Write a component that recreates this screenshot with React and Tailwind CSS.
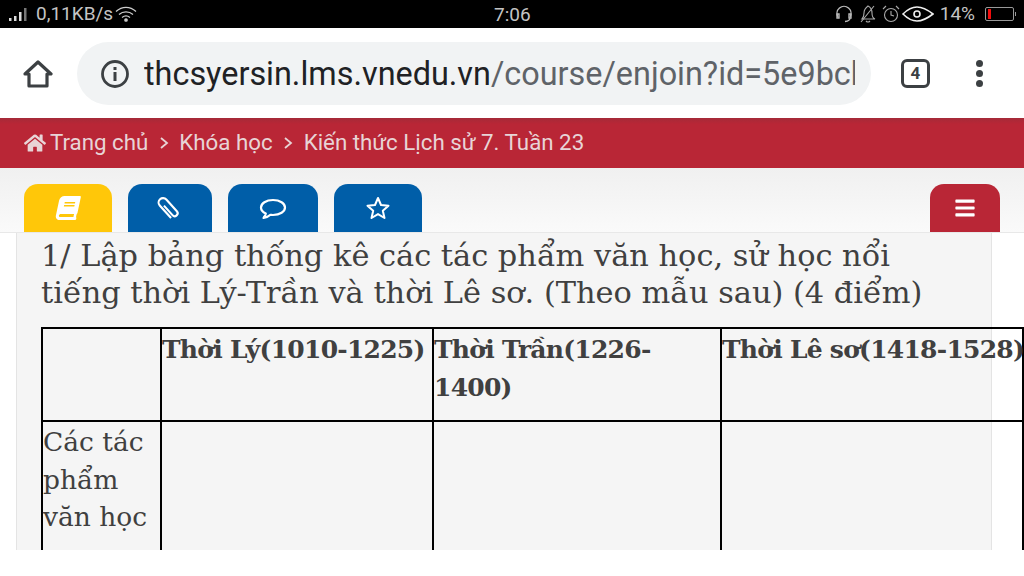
import React from "react";
import { FaHome, FaBook, FaBars } from "react-icons/fa";

function Status() {
  return (
    <div className="h-[28px] bg-black text-[#c4c4c4] flex items-center justify-between relative text-[19px] font-['Roboto',sans-serif]">
      <div className="flex items-center pl-[9px]">
        <svg width="22" height="16" viewBox="0 0 22 16" className="mr-[5px]">
          <rect x="0" y="12" width="2.5" height="3" fill="#ddd" />
          <rect x="5" y="10" width="2.5" height="5" fill="#ddd" />
          <rect x="10" y="6" width="2.5" height="9" fill="#ddd" />
          <rect x="15" y="2" width="2.5" height="13" fill="#777" />
        </svg>
        <span>0,11KB/s</span>
        <svg width="24" height="18" viewBox="0 0 24 18" fill="none" stroke="#ccc" strokeWidth="1.3" className="ml-[1px]">
          <path d="M2 6.5C8 1 16 1 22 6.5" />
          <path d="M5 9.5C9 6 15 6 19 9.5" />
          <path d="M8 12.5C10.5 10.5 13.5 10.5 16 12.5" />
          <circle cx="12" cy="15" r="1.2" fill="#ccc" />
        </svg>
      </div>
      <span className="absolute left-[494px] top-[1px]">7:06</span>
      <div className="flex items-center pr-[10px]">
        <svg width="18" height="18" viewBox="0 0 18 18" fill="none" stroke="#bbb" strokeWidth="1.4" className="mr-[6px]">
          <path d="M3 12a7 7 0 1 1 12 0" />
          <path d="M2 9h2v4H2zM14 9h2v4h-2z" />
          <path d="M15 13q0 3-5 3.5" />
        </svg>
        <svg width="18" height="20" viewBox="0 0 18 20" fill="none" stroke="#aaa" strokeWidth="1.1" className="mr-[5px]">
          <path d="M3 15q2-2 2-6t4-7q4 2 4 7t3 6z" />
          <path d="M7 17q2 2 4 0M2 18L15 2" />
        </svg>
        <svg width="18" height="18" viewBox="0 0 18 18" fill="none" stroke="#aaa" strokeWidth="1.1" className="mr-[2px]">
          <circle cx="9" cy="10" r="6.5" />
          <path d="M9 6v4l3 1M1 4l3-3M17 4l-3-3" />
        </svg>
        <svg width="32" height="16" viewBox="0 0 32 16" fill="none" stroke="#eee" strokeWidth="1.6" className="mr-[6px]">
          <path d="M1 8Q8 1 15 1T31 8Q22 15 15 15T1 8z" />
          <circle cx="15" cy="8" r="3" />
        </svg>
        <span className="mr-[10px]">14%</span>
        <div className="w-[29px] h-[14px] border border-[#999] rounded-[2px] flex items-center p-[1px] relative">
          <div className="w-[3px] h-[10px] bg-[#f20d0d] ml-[1px]" />
          <div className="absolute -right-[3px] top-[4px] w-[1px] h-[4px] bg-[#999]" />
        </div>
      </div>
    </div>
  );
}

function Browser() {
  return (
    <div className="h-[90px] bg-white flex items-center font-['Roboto',sans-serif]">
      <svg width="30" height="30" viewBox="0 0 30 30" fill="none" stroke="#3c4043" strokeWidth="3.2" className="ml-[23px] mt-[1px]">
        <path d="M2 15L15 3l13 12h-4v12H6V15z" strokeLinejoin="round" />
      </svg>
      <div className="ml-[24px] w-[794px] h-[63px] rounded-[32px] bg-[#f1f3f4] flex items-center pl-[23px] mt-[1px]">
        <svg width="30" height="30" viewBox="0 0 30 30" fill="none" className="shrink-0">
          <circle cx="15" cy="15" r="12.5" stroke="#3c4043" strokeWidth="2.8" />
          <rect x="13.5" y="13" width="3" height="9" fill="#3c4043" />
          <rect x="13.5" y="8" width="3" height="3" fill="#3c4043" />
        </svg>
        <div className="ml-[14px] w-[711px] overflow-hidden whitespace-nowrap text-[32.4px] leading-[40px] text-[#5f6368]">
          <span className="text-[#202124]">thcsyersin.lms.vnedu.vn</span>/course/enjoin?id=5e9bcb
        </div>
      </div>
      <div className="ml-[30px] w-[29px] h-[29px] border-[3px] border-[#3c4043] rounded-[6px] flex items-center justify-center text-[17px] font-bold text-[#3c4043] mt-[1px]">
        4
      </div>
      <div className="ml-[46px] flex flex-col gap-[3px] mt-[1px]">
        <div className="w-[7px] h-[7px] rounded-full bg-[#3c4043]" />
        <div className="w-[7px] h-[7px] rounded-full bg-[#3c4043]" />
        <div className="w-[7px] h-[7px] rounded-full bg-[#3c4043]" />
      </div>
    </div>
  );
}

function Chevron() {
  return (
    <svg width="10" height="14" viewBox="0 0 10 14" fill="none" stroke="#e8d4d6" strokeWidth="1.8" className="mx-[10.5px] mt-[1px]">
      <path d="M2 2l6 5-6 5" />
    </svg>
  );
}

function Crumbs() {
  return (
    <div className="h-[50px] bg-[linear-gradient(#a52a38,#b92636_6px)] flex items-center pl-[24px] pb-[1px] text-[22.3px] text-[#e8d4d6] font-['Roboto',sans-serif]">
      <FaHome className="text-[22px] mr-[4px]" />
      <span>Trang chủ</span>
      <Chevron />
      <span>Khóa học</span>
      <Chevron />
      <span>Kiến thức Lịch sử 7. Tuần 23</span>
    </div>
  );
}

function Tab({ color, w, ml, children }) {
  return (
    <div
      className={`h-[48px] rounded-t-[14px] flex items-center justify-center text-white text-[24px] ${color} ${w} ${ml}`}
    >
      {children}
    </div>
  );
}

function Tabs() {
  return (
    <div className="h-[65px] bg-[linear-gradient(#f0f0f0,#fafafa)] flex items-end border-b border-[#e8e8e8]">
      <Tab color="bg-[#ffc709]" w="w-[88px]" ml="ml-[24px]"><FaBook className="-skew-x-12" /></Tab>
      <Tab color="bg-[#005ea8]" w="w-[84px]" ml="ml-[16px]">
        <svg width="28" height="28" viewBox="0 0 24 24" fill="none" stroke="white" strokeWidth="1.8">
          <path transform="rotate(-42 12 12)" d="M9.500 7v11a2.500 2.500 0 0 0 5 0V4.500a3.800 3.800 0 0 0-7.600 0v14.500" />
        </svg>
      </Tab>
      <Tab color="bg-[#005ea8]" w="w-[90px]" ml="ml-[16px]">
        <svg width="28" height="24" viewBox="0 0 28 24" fill="none" stroke="white" strokeWidth="2.2" className="mt-[2px]">
          <path d="M14 3C7 3 2 6.500 2 10.500c0 2.500 2 4.800 4.800 6C6.500 18 6 19.500 4.500 21c3-.5 5.500-1.800 7-3.200 1 .1 1.600.2 2.500.2 7 0 12-3.500 12-7.500S21 3 14 3z" strokeLinejoin="round" />
        </svg>
      </Tab>
      <Tab color="bg-[#005ea8]" w="w-[88px]" ml="ml-[16px]">
        <svg width="24" height="24" viewBox="0 0 24 24" fill="none" stroke="white" strokeWidth="2">
          <path d="M12 2l3 7 7.500.7-5.700 5 1.700 7.300-6.500-3.900-6.500 3.900 1.700-7.300-5.700-5L9 9z" strokeLinejoin="round" />
        </svg>
      </Tab>
      <Tab color="bg-[#b92636]" w="w-[70px]" ml="ml-[508px]"><FaBars className="text-[22px]" /></Tab>
    </div>
  );
}

function Content() {
  const cell = "border-2 border-black align-top p-0 text-left";
  const head = "border-2 border-black align-top p-0 pt-[2px] text-left text-[25px] tracking-[-0.75px]";
  return (
    <div className="h-[317px] bg-white pl-[16px] pr-[32px] overflow-hidden font-['DejaVu_Serif',serif]">
      <div className="h-full bg-[#f5f5f5] border-x border-[#e4e4e4] pl-[25px] pt-[4px] text-[#404040]">
        <p className="w-[900px] text-[30.4px] leading-[37px] whitespace-nowrap -ml-[1px]">
          1/ Lập bảng thống kê các tác phẩm văn học, sử học nổi
          <br />
          tiếng thời Lý-Trần và thời Lê sơ. (Theo mẫu sau) (4 điểm)
        </p>
        <table className="mt-[16px] -ml-[1px] w-[981px] table-fixed border-collapse text-[26.5px] leading-[37.5px]">
          <colgroup>
            <col className="w-[119px]" />
            <col className="w-[272px]" />
            <col className="w-[288px]" />
            <col className="w-[302px]" />
          </colgroup>
          <tbody>
            <tr className="h-[93px]">
              <td className={cell}></td>
              <th className={`${head} whitespace-nowrap`}>Thời Lý(1010-1225)</th>
              <th className={head}>Thời Trần(1226-<br />1400)</th>
              <th className={`${head} whitespace-nowrap`}>Thời Lê sơ(1418-1528)</th>
            </tr>
            <tr className="h-[180px]">
              <td className={`${cell} pt-[1px]`}>Các tác<br />phẩm<br />văn học</td>
              <td className={cell}></td>
              <td className={cell}></td>
              <td className={cell}></td>
            </tr>
          </tbody>
        </table>
      </div>
    </div>
  );
}

export default function App() {
  return (
    <div className="w-[1024px] h-[576px] bg-white overflow-hidden">
      <Status />
      <Browser />
      <Crumbs />
      <Tabs />
      <Content />
    </div>
  );
}
